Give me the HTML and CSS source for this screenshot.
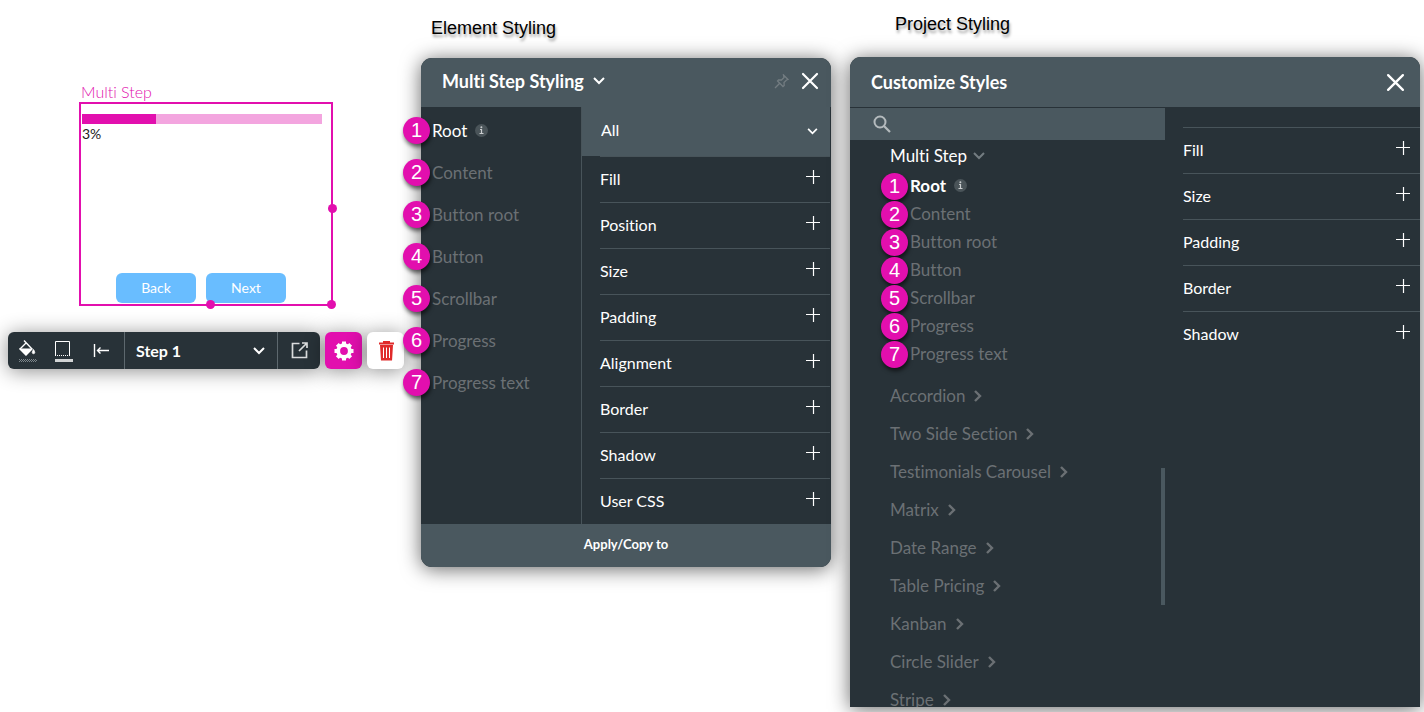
FILE: index.html
```html
<!DOCTYPE html>
<html lang="en">
    <head>
        <meta charset="UTF-8">
        <meta name="viewport" content="width=device-width, initial-scale=1.0">
        <title>Multi Step Styling</title>
        <link rel="stylesheet" href="styles.css">
    </head>
    <body>
        <!-- icons used more than once -->
        <svg class="sprite" aria-hidden="true">
            <symbol id="plus" viewBox="0 0 14 14"><path d="M7.500 0v14M0 6.500h14" stroke="currentColor" stroke-width="1.2"/></symbol>
            <symbol id="down" viewBox="0 0 12 8"><path d="M1 1l5 5 5-5" fill="none" stroke="currentColor" stroke-width="2"/></symbol>
            <symbol id="right" viewBox="0 0 8 12"><path d="M1 1l5 5-5 5" fill="none" stroke="currentColor" stroke-width="2.4"/></symbol>
            <symbol id="close" viewBox="0 0 18 18"><path d="M2 2l14 14M16 2L2 16" stroke="currentColor" stroke-width="2.2" stroke-linecap="round"/></symbol>
            <symbol id="info" viewBox="0 0 13 13"><circle cx="6.500" cy="6.500" r="6.500" fill="#4a5459"/><path d="M5 5.500h1.500v4M4.500 9.500h4" fill="none" stroke="#c9cdcf" stroke-width="1.2"/><circle cx="6.400" cy="3.200" r="1" fill="#c9cdcf"/></symbol>
        </svg>

        <section class="editor">
            <p class="widget-name">Multi Step</p>
            <div class="widget">
                <div class="bar"><div class="bar-value"></div></div>
                <span class="bar-text">3%</span>
                <div class="steps">
                    <button type="button">Back</button>
                    <button type="button">Next</button>
                </div>
                <i class="handle handle-right"></i>
                <i class="handle handle-bottom"></i>
                <i class="handle handle-corner"></i>
            </div>

            <div class="toolbar">
                <div class="tools">
                    <div class="tool-icons">
                        <button type="button" aria-label="Fill color">
                            <svg width="20" height="24" viewBox="0 0 20 24">
                                <path d="M6 1.500L14 10l-6 6-6-6 6-6" fill="none" stroke="#fff" stroke-width="1.400"/>
                                <path d="M1 9.500h13.500L8 16.500z" fill="#fff"/>
                                <path d="M15.500 10.500q2.500 4 0 4.200q-2.500-.2 0-4.200z" fill="#fff" stroke="#fff" stroke-width=".8"/>
                                <path d="M1 20.500h18M1 22.500h18" stroke="#7d868b" stroke-dasharray="1 1"/>
                                <path d="M2 21.500h18" stroke="#7d868b" stroke-dasharray="1 1"/>
                            </svg>
                        </button>
                        <button type="button" aria-label="Border">
                            <svg width="20" height="24" viewBox="0 0 20 24">
                                <path d="M1.500 17V2.500h14V17" fill="none" stroke="#fff"/>
                                <path d="M1 16.500h15" stroke="#fff" stroke-dasharray="1 1"/>
                                <path d="M1 21.500h18" stroke="#d2d4d5" stroke-width="3"/>
                            </svg>
                        </button>
                        <button type="button" aria-label="Align left">
                            <svg width="16" height="14" viewBox="0 0 16 14">
                                <path d="M1.500 0v13M4.500 6.500H16M7.500 3.500l-3 3 3 3" fill="none" stroke="#fff" stroke-width="1.400"/>
                            </svg>
                        </button>
                    </div>
                    <div class="step-select">
                        <select aria-label="Step"><option>Step 1</option></select>
                        <svg class="arrow" width="12" height="8"><use href="#down"/></svg>
                    </div>
                    <button type="button" class="open" aria-label="Open">
                        <svg width="17" height="17" viewBox="0 0 17 17">
                            <path d="M8.500 1.500h-7v14h14v-7M11 1h5v5M15.500 1.500L8 9" fill="none" stroke="#dadcdd" stroke-width="1.700"/>
                        </svg>
                    </button>
                </div>
                <button type="button" class="square settings" aria-label="Settings">
                    <svg width="20" height="20" viewBox="0 0 20 20">
                        <circle cx="10" cy="10" r="5.800" fill="none" stroke="#fff" stroke-width="3.800"/>
                        <path d="M10 .5v3M10 16.500v3M.5 10h3M16.500 10h3M3.300 3.300l2 2M14.700 14.700l2 2M3.300 16.700l2-2M14.700 5.300l2-2" stroke="#fff" stroke-width="4"/>
                    </svg>
                </button>
                <button type="button" class="square trash" aria-label="Delete">
                    <svg width="15" height="20" viewBox="0 0 15 20">
                        <path d="M5 1.500V.7h5v.8M0 2.500h15" fill="none" stroke="#e02a2a" stroke-width="2"/>
                        <path d="M1 4h13l-1 15.500H2z" fill="#e02a2a"/>
                        <path d="M4.500 6.500v10.500M7.500 6.500v10.500M10.500 6.500v10.500" stroke="#fff" stroke-width="1"/>
                    </svg>
                </button>
            </div>
        </section>

        <section class="element">
            <h2 class="caption">Element Styling</h2>
            <div class="panel">
                <header class="panel-head">
                    <button type="button" class="title">Multi Step Styling <svg width="12" height="8"><use href="#down"/></svg></button>
                    <button type="button" class="pin" aria-label="Pin">
                        <svg width="15" height="15" viewBox="0 0 15 15">
                            <path d="M9.500 1l4.500 4.500-1.500.5-2.500 2.500.2 3-1.200 1-5.500-5.500 1-1.200 3 .2L10 3.500zM5.500 9.500L1 14" fill="none" stroke="currentColor" stroke-width="1.300"/>
                        </svg>
                    </button>
                    <button type="button" aria-label="Close"><svg width="18" height="18"><use href="#close"/></svg></button>
                </header>
                <div class="panel-body">
                    <ul class="parts">
                        <li class="active"><b class="num">1</b><a href="#">Root</a><svg width="13" height="13"><use href="#info"/></svg></li>
                        <li><b class="num">2</b><a href="#">Content</a></li>
                        <li><b class="num">3</b><a href="#">Button root</a></li>
                        <li><b class="num">4</b><a href="#">Button</a></li>
                        <li><b class="num">5</b><a href="#">Scrollbar</a></li>
                        <li><b class="num">6</b><a href="#">Progress</a></li>
                        <li><b class="num">7</b><a href="#">Progress text</a></li>
                    </ul>
                    <div class="props">
                        <div class="state">
                            <select aria-label="State"><option>All</option></select>
                            <svg class="arrow" width="11" height="7"><use href="#down"/></svg>
                        </div>
                        <div class="rows">
                            <button type="button">Fill<svg width="14" height="14"><use href="#plus"/></svg></button>
                            <button type="button">Position<svg width="14" height="14"><use href="#plus"/></svg></button>
                            <button type="button">Size<svg width="14" height="14"><use href="#plus"/></svg></button>
                            <button type="button">Padding<svg width="14" height="14"><use href="#plus"/></svg></button>
                            <button type="button">Alignment<svg width="14" height="14"><use href="#plus"/></svg></button>
                            <button type="button">Border<svg width="14" height="14"><use href="#plus"/></svg></button>
                            <button type="button">Shadow<svg width="14" height="14"><use href="#plus"/></svg></button>
                            <button type="button">User CSS<svg width="14" height="14"><use href="#plus"/></svg></button>
                        </div>
                    </div>
                </div>
                <button type="button" class="apply">Apply/Copy to</button>
            </div>
        </section>

        <section class="project">
            <h2 class="caption">Project Styling</h2>
            <div class="panel">
                <header class="panel-head">
                    <h3 class="title">Customize Styles</h3>
                    <button type="button" aria-label="Close"><svg width="19" height="19"><use href="#close"/></svg></button>
                </header>
                <div class="panel-body">
                    <div class="browser">
                        <label class="search">
                            <svg width="18" height="18" viewBox="0 0 18 18"><circle cx="7" cy="7" r="5.500" fill="none" stroke="#b4babd" stroke-width="2"/><path d="M11 11l6 6" stroke="#b4babd" stroke-width="2.200"/></svg>
                            <input type="search" aria-label="Search">
                        </label>
                        <div class="tree">
                            <a href="#" class="open-group">Multi Step <svg width="12" height="8"><use href="#down"/></svg></a>
                            <ul class="parts">
                                <li class="active"><b class="num">1</b><a href="#">Root</a><svg width="13" height="13"><use href="#info"/></svg></li>
                                <li><b class="num">2</b><a href="#">Content</a></li>
                                <li><b class="num">3</b><a href="#">Button root</a></li>
                                <li><b class="num">4</b><a href="#">Button</a></li>
                                <li><b class="num">5</b><a href="#">Scrollbar</a></li>
                                <li><b class="num">6</b><a href="#">Progress</a></li>
                                <li><b class="num">7</b><a href="#">Progress text</a></li>
                            </ul>
                            <ul class="groups">
                                <li><a href="#">Accordion <svg width="8" height="12"><use href="#right"/></svg></a></li>
                                <li><a href="#">Two Side Section <svg width="8" height="12"><use href="#right"/></svg></a></li>
                                <li><a href="#">Testimonials Carousel <svg width="8" height="12"><use href="#right"/></svg></a></li>
                                <li><a href="#">Matrix <svg width="8" height="12"><use href="#right"/></svg></a></li>
                                <li><a href="#">Date Range <svg width="8" height="12"><use href="#right"/></svg></a></li>
                                <li><a href="#">Table Pricing <svg width="8" height="12"><use href="#right"/></svg></a></li>
                                <li><a href="#">Kanban <svg width="8" height="12"><use href="#right"/></svg></a></li>
                                <li><a href="#">Circle Slider <svg width="8" height="12"><use href="#right"/></svg></a></li>
                                <li><a href="#">Stripe <svg width="8" height="12"><use href="#right"/></svg></a></li>
                            </ul>
                            <i class="thumb"></i>
                        </div>
                    </div>
                    <div class="rows">
                        <button type="button">Fill<svg width="14" height="14"><use href="#plus"/></svg></button>
                        <button type="button">Size<svg width="14" height="14"><use href="#plus"/></svg></button>
                        <button type="button">Padding<svg width="14" height="14"><use href="#plus"/></svg></button>
                        <button type="button">Border<svg width="14" height="14"><use href="#plus"/></svg></button>
                        <button type="button">Shadow<svg width="14" height="14"><use href="#plus"/></svg></button>
                    </div>
                </div>
            </div>
        </section>
    </body>
</html>
```
FILE: styles.css
```css
*{
    margin: 0;
    padding: 0;
    box-sizing: border-box;
}
body{
    display: flex;
    align-items: flex-start;
    height: 100vh;
    padding: 0 4px 5px 8px;
    background-color: white;
    font-family: Lato, sans-serif;
    font-size: 16px;
    font-variant-ligatures: none;
    color: white;
}
button, select, input{
    font: inherit;
    font-variant-ligatures: none;
    color: inherit;
    border: none;
    outline: none;
    background: none;
}
button, select{
    cursor: pointer;
}
select{
    appearance: none;
    width: 100%;
    height: 100%;
}
a{
    color: inherit;
    text-decoration: none;
}
ul{
    list-style: none;
}
svg{
    display: block;
    flex: none;
}
.sprite{
    position: absolute;
    width: 0;
    height: 0;
}
.arrow{
    position: absolute;
    top: 50%;
    right: 12px;
    margin-top: -4px;
    pointer-events: none;
}

/* widget on the canvas */
.editor{
    flex: 396 1 0;
    padding-top: 82px;
}
.widget-name{
    margin-left: 73px;
    line-height: 20px;
    font-weight: 300;
    color: #e20fae;
}
.widget{
    position: relative;
    display: flex;
    flex-direction: column;
    width: 254px;
    min-height: 204px;
    margin-left: 71px;
    padding: 10px 9px 1px 1px;
    border: 2px solid #e20fae;
}
.bar{
    height: 10px;
    background-color: #f3a5df;
}
.bar-value{
    width: 31%;
    height: 100%;
    background-color: #e20fae;
}
.bar-text{
    font-size: 14px;
    line-height: 20px;
    color: #222;
}
.steps{
    display: flex;
    justify-content: center;
    gap: 10px;
    margin-top: auto;
    padding-right: 2px;
}
.steps button{
    width: 80px;
    height: 30px;
    padding-bottom: 1px;
    border-radius: 6px;
    font-size: 14px;
    background-color: #69bdff;
}
.handle{
    position: absolute;
    width: 9px;
    height: 9px;
    border-radius: 50%;
    background-color: #e20fae;
}
.handle-right{
    right: -6px;
    top: 50%;
}
.handle-bottom{
    bottom: -5px;
    left: 50%;
}
.handle-corner{
    right: -5px;
    bottom: -5px;
}

.toolbar{
    display: flex;
    gap: 5px;
    height: 37px;
    margin-top: 26px;
}
.tools{
    display: flex;
    flex: 1;
    border-radius: 6px;
    background-color: #283238;
    box-shadow: 0 2px 20px rgba(0,0,0,.45);
}
.tool-icons{
    display: flex;
    padding: 0 5px 0 1px;
}
.tool-icons button{
    display: flex;
    align-items: center;
    justify-content: center;
    width: 37px;
}
.tool-icons button:nth-child(2){
    width: 36px;
}
.step-select{
    position: relative;
    flex: 1;
    border-left: 1px solid #5d686e;
    border-right: 1px solid #5d686e;
}
.step-select select{
    padding-left: 11px;
    font-weight: 700;
}
.open, .square{
    display: flex;
    align-items: center;
    justify-content: center;
    width: 42px;
}
.square{
    width: 37px;
    border-radius: 6px;
    box-shadow: 0 2px 20px rgba(0,0,0,.45);
}
.settings{
    background-color: #e20fae;
}
.trash{
    padding-left: 1px;
    background-color: white;
}

/* panels */
.caption{
    line-height: 20px;
    font-family: "Liberation Sans", Arial, sans-serif;
    font-size: 18px;
    font-weight: 400;
    color: black;
    text-shadow: 1px 3px 3px rgba(0,0,0,.4);
}
.panel{
    border-radius: 11px;
    background-color: #283238;
    box-shadow: 0 2px 20px rgba(0,0,0,.6);
}
.panel-head{
    display: flex;
    align-items: center;
    height: 49px;
    padding: 0 12px 3px 21px;
    border-radius: 11px 11px 0 0;
    background-color: #4a585f;
}
.title{
    display: flex;
    align-items: center;
    gap: 9px;
    margin-right: auto;
    padding-bottom: 1px;
    font-size: 18px;
    font-weight: 700;
}
.pin{
    margin-right: 12px;
    color: #737c81;
}
.panel-body{
    display: flex;
}
.parts{
    color: #6b7074;
    font-size: 17px;
}
.parts li{
    position: relative;
    display: flex;
    align-items: center;
    gap: 8px;
}
.parts .active{
    color: white;
}
.num{
    position: absolute;
    left: -29px;
    top: 50%;
    width: 27px;
    height: 27px;
    margin-top: -13px;
    border-radius: 50%;
    font-family: "Liberation Sans", Arial, sans-serif;
    font-size: 20px;
    font-weight: 400;
    line-height: 27px;
    text-align: center;
    color: white;
    background-color: #e20fae;
    box-shadow: 1px 3px 4px rgba(0,0,0,.6);
}
.rows button{
    display: flex;
    align-items: center;
    justify-content: space-between;
    width: 100%;
    height: 46px;
    padding: 0 10px 2px 0;
    border-top: 1px solid #48545a;
}
.rows svg{
    margin-bottom: 4px;
}

.element{
    flex: 410 1 0;
    margin-left: 17px;
}
.element .caption{
    padding: 18px 0 20px 10px;
}
.element .parts{
    width: 160px;
    padding: 2px 0 0 11px;
}
.element .parts li{
    height: 42px;
}
.props{
    flex: 1;
    border-left: 1px solid #48545a;
}
.state{
    position: relative;
    height: 49px;
    margin-right: 1px;
    background-color: #4a585f;
}
.state select{
    padding: 0 0 5px 19px;
}
.props .rows{
    padding: 0 1px 0 18px;
}
.apply{
    display: block;
    width: 100%;
    height: 43px;
    padding-bottom: 3px;
    border-radius: 0 0 11px 11px;
    font-size: 13px;
    font-weight: 700;
    background-color: #4a585f;
}

.project{
    display: flex;
    flex-direction: column;
    flex: 570 1 0;
    height: 100%;
    margin-left: 19px;
}
.project .caption{
    padding: 14px 0 23px 45px;
}
.project .panel{
    display: flex;
    flex-direction: column;
    flex: 1;
    min-height: 0;
    border-radius: 11px 11px 0 0;
}
.project .panel-head{
    height: 50px;
    padding: 0 15px 0 21px;
}
.project .panel-body{
    flex: 1;
    min-height: 0;
}
.browser{
    display: flex;
    flex-direction: column;
    width: 315px;
}
.search{
    display: flex;
    align-items: center;
    gap: 8px;
    height: 32px;
    margin-top: 1px;
    padding: 0 23px;
    background-color: #4a585f;
}
.search input{
    flex: 1;
}
.tree{
    position: relative;
    flex: 1;
    min-height: 0;
    padding-left: 40px;
    overflow: hidden;
    font-size: 17px;
    color: #6b7074;
}
.tree a{
    display: flex;
    align-items: center;
    gap: 9px;
}
.tree .open-group{
    gap: 6px;
    height: 31px;
    color: white;
}
.open-group svg{
    color: #737c81;
}
.tree .parts{
    padding-left: 20px;
}
.tree .parts li{
    height: 28px;
}
.tree .num{
    margin-top: -12px;
}
.tree .active{
    font-weight: 700;
}
.groups{
    padding-top: 9px;
}
.groups a{
    height: 38px;
}
.groups svg{
    margin-top: 2px;
}
.thumb{
    position: absolute;
    right: 0;
    top: 328px;
    width: 4px;
    height: 137px;
    background-color: #4a585f;
}
.project .rows{
    flex: 1;
    padding: 20px 0 0 18px;
}
```
